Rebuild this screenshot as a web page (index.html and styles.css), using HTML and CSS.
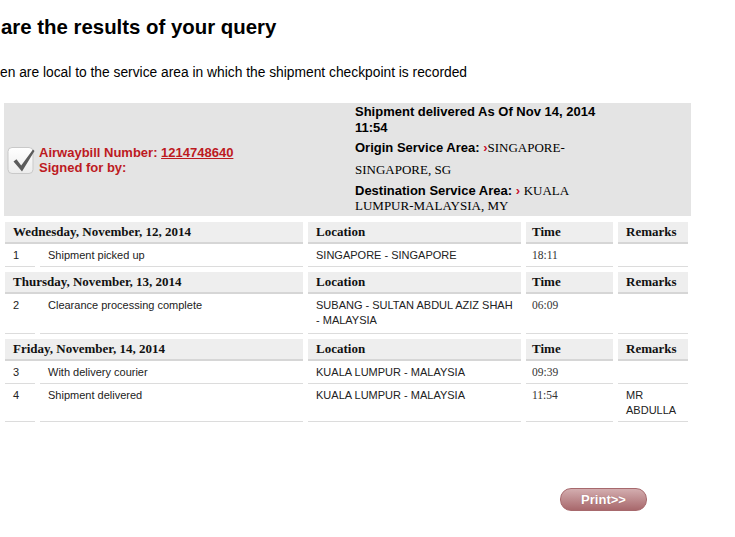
FILE: index.html
```html
<!DOCTYPE html>
<html lang="en">
<head>
  <meta charset="UTF-8">
  <title>Tracking results</title>
  <link rel="stylesheet" href="styles.css">
</head>
<body>
  <h1 class="title">are the results of your query</h1>
  <p class="note">en are local to the service area in which the shipment checkpoint is recorded</p>

  <div class="summary">
    <div class="summary-left">
      <svg class="tick" viewBox="0 0 28 30" width="28" height="30">
        <defs>
          <linearGradient id="boxfill" x1="0" y1="0" x2="0" y2="1">
            <stop offset="0" stop-color="#ffffff"/>
            <stop offset="1" stop-color="#ececec"/>
          </linearGradient>
        </defs>
        <rect x="1" y="2.5" width="25" height="26" rx="4" fill="url(#boxfill)" stroke="#c9c9c9"/>
        <path d="M6.5 16.5 L9.5 14.2 L14.2 20.5 L26 4.5 L27.5 6 L15 26.5 Z" fill="#5b5b5b"/>
      </svg>
      <div class="awb">Airwaybill Number: <a href="#">1214748640</a><br>Signed for by:</div>
    </div>
    <div class="summary-right">
      <div class="status">Shipment delivered As Of Nov 14, 2014 11:54</div>
      <div class="origin"><b>Origin Service Area:</b> <span class="arrow">&rsaquo;</span><span class="place">SINGAPORE-SINGAPORE, SG</span></div>
      <div class="dest"><b>Destination Service Area:</b> <span class="arrow">&rsaquo;</span> <span class="place">KUALA LUMPUR-MALAYSIA, MY</span></div>
    </div>
  </div>

  <table class="track">
    <colgroup>
      <col class="c-num">
      <col class="c-desc">
      <col class="c-loc">
      <col class="c-time">
      <col class="c-rem">
    </colgroup>
    <tr>
      <th colspan="2">Wednesday, November, 12, 2014</th>
      <th>Location</th>
      <th class="time">Time</th>
      <th>Remarks</th>
    </tr>
    <tr>
      <td>1</td>
      <td>Shipment picked up</td>
      <td>SINGAPORE - SINGAPORE</td>
      <td class="time">18:11</td>
      <td></td>
    </tr>
    <tr>
      <th colspan="2">Thursday, November, 13, 2014</th>
      <th>Location</th>
      <th class="time">Time</th>
      <th>Remarks</th>
    </tr>
    <tr class="tall">
      <td>2</td>
      <td>Clearance processing complete</td>
      <td>SUBANG - SULTAN ABDUL AZIZ SHAH - MALAYSIA</td>
      <td class="time">06:09</td>
      <td></td>
    </tr>
    <tr>
      <th colspan="2">Friday, November, 14, 2014</th>
      <th>Location</th>
      <th class="time">Time</th>
      <th>Remarks</th>
    </tr>
    <tr>
      <td>3</td>
      <td>With delivery courier</td>
      <td>KUALA LUMPUR - MALAYSIA</td>
      <td class="time">09:39</td>
      <td></td>
    </tr>
    <tr>
      <td>4</td>
      <td>Shipment delivered</td>
      <td>KUALA LUMPUR - MALAYSIA</td>
      <td class="time">11:54</td>
      <td>MR ABDULLA</td>
    </tr>
  </table>

  <div class="actions">
    <button class="print">Print&gt;&gt;</button>
  </div>
</body>
</html>
```

FILE: styles.css
```css
body {
  margin: 0;
  font-family: "Liberation Sans", Arial, sans-serif;
  color: #000;
  background: #fff;
}
.title {
  font-size: 20.4px;
  line-height: 23px;
  font-weight: bold;
  margin: 16px 0 0 1px;
}
.note {
  font-size: 13.8px;
  line-height: 16px;
  margin: 26px 0 0;
}

/* grey summary box */
.summary {
  display: flex;
  width: 687px;
  margin: 22px 0 0 4px;
  background: #e4e4e4;
}
.summary-left {
  width: 351px;
  display: flex;
  align-items: center;
  padding-left: 3px;
  box-sizing: border-box;
}
.tick {
  flex: none;
  margin-right: 4px;
}
.awb {
  color: #bd1a1f;
  font-size: 13px;
  line-height: 15px;
  font-weight: bold;
}
.awb a {
  color: inherit;
}
.summary-right {
  width: 255px;
  font-size: 13px;
  padding: 1px 0 3px;
}
.status {
  font-weight: bold;
  line-height: 16px;
}
.origin {
  line-height: 22px;
  margin-top: 1px;
}
.dest {
  line-height: 15px;
  margin-top: 2px;
}
.place {
  font-family: "Liberation Serif", "Times New Roman", serif;
}
.arrow {
  color: #c8102e;
  font-weight: bold;
}

/* checkpoint table */
.track {
  border-collapse: separate;
  border-spacing: 5px 0;
  table-layout: fixed;
  width: 693px;
  margin-top: 1px;
}
.c-num { width: 30px; }
.c-desc { width: 263px; }
.c-loc { width: 213px; }
.c-time { width: 87px; }
.c-rem { width: 70px; }
.track th {
  background: #eeeeee;
  border-top: 5px solid #fff;
  border-bottom: 2px solid #d6d6d6;
  font: bold 13px/20px "Liberation Serif", "Times New Roman", serif;
  color: #111;
  text-align: left;
  padding: 0 8px;
}
.track td {
  font-size: 11px;
  line-height: 15px;
  color: #222;
  padding: 4px 8px 3px;
  border-bottom: 1px solid #dcdcdc;
  vertical-align: top;
}
.track .tall td {
  padding-bottom: 5px;
}
.track .time {
  padding-left: 6px;
}
.track td.time {
  font-family: "Liberation Serif", "Times New Roman", serif;
  font-size: 11.5px;
  color: #333;
}

.actions {
  display: flex;
  justify-content: flex-end;
  width: 647px;
  margin-top: 66px;
}
.print {
  width: 87px;
  height: 23px;
  border: 1px solid #a7696d;
  border-radius: 11px;
  background: linear-gradient(#d3adaf, #a8686c);
  color: #fff;
  font: bold 13px/21px "Liberation Sans", Arial, sans-serif;
  text-shadow: 0 0 1px rgba(120, 60, 60, 0.5);
  padding: 0;
}
```
